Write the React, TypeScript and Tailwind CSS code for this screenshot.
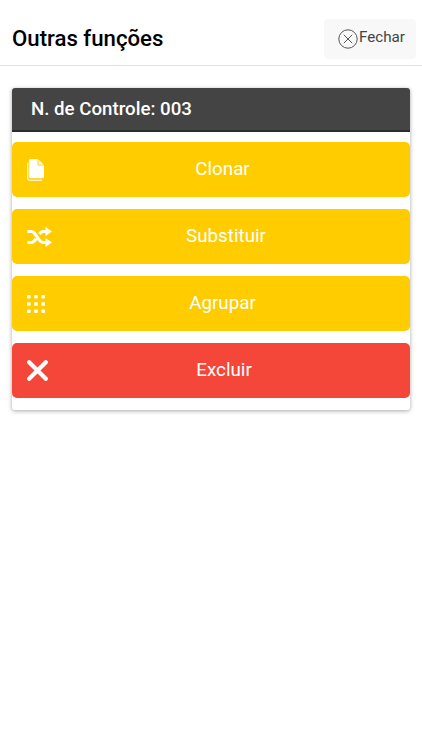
const CopyIcon = () => (
  <svg width="18" height="22" viewBox="0 0 18 22" fill="none" className="shrink-0">
    <path d="M0.8 3.5V20a1.2 1.2 0 0 0 1.2 1.2H15" stroke="white" strokeWidth="1.1" fill="none" />
    <path d="M2.2 1.2A1.2 1.2 0 0 1 3.4 0H11l6 6v12a1.2 1.2 0 0 1-1.2 1.2H3.4A1.2 1.2 0 0 1 2.2 18Z" fill="white" />
    <path d="M11 0v6h6" fill="none" stroke="#ffcc00" strokeWidth="0.9" />
  </svg>
)

const ShuffleIcon = () => (
  <svg width="25" height="20" viewBox="0 0 25 20" fill="none" className="shrink-0">
    <path d="M0.5 4.5H4.5C9 4.5 11 15.5 16 15.5H20" stroke="white" strokeWidth="3.2" />
    <path d="M0.5 15.5H4.5C6.5 15.5 8 13.5 9 11.8M12.5 7C13.5 5.5 14.5 4.5 16 4.5H20" stroke="white" strokeWidth="3.2" />
    <path d="M18.5 0L25 4.5L18.5 9Z" fill="white" />
    <path d="M18.5 11L25 15.5L18.5 20Z" fill="white" />
  </svg>
)

const GridIcon = () => (
  <svg width="18" height="18" viewBox="0 0 18 18" fill="white" className="shrink-0">
    <rect x="0" y="0" width="3.6" height="3.6" rx="0.8" />
    <rect x="7.2" y="0" width="3.6" height="3.6" rx="0.8" />
    <rect x="14.4" y="0" width="3.6" height="3.6" rx="0.8" />
    <rect x="0" y="7.2" width="3.6" height="3.6" rx="0.8" />
    <rect x="7.2" y="7.2" width="3.6" height="3.6" rx="0.8" />
    <rect x="14.4" y="7.2" width="3.6" height="3.6" rx="0.8" />
    <rect x="0" y="14.4" width="3.6" height="3.6" rx="0.8" />
    <rect x="7.2" y="14.4" width="3.6" height="3.6" rx="0.8" />
    <rect x="14.4" y="14.4" width="3.6" height="3.6" rx="0.8" />
  </svg>
)

const CloseIcon = () => (
  <svg width="21" height="21" viewBox="0 0 21 21" fill="none" className="shrink-0">
    <path d="M2.2 2.2L18.8 18.8M18.8 2.2L2.2 18.8" stroke="white" strokeWidth="4.2" strokeLinecap="round" />
  </svg>
)

const buttons = [
  { label: 'Clonar', icon: <CopyIcon />, color: 'bg-[#ffcc00]' },
  { label: 'Substituir', icon: <ShuffleIcon />, color: 'bg-[#ffcc00]' },
  { label: 'Agrupar', icon: <GridIcon />, color: 'bg-[#ffcc00]' },
  { label: 'Excluir', icon: <CloseIcon />, color: 'bg-[#f4473a]' },
]

const App = () => {
  return (
    <div className="min-h-[750px] w-full bg-white font-['Roboto',sans-serif]">
      <div className="flex h-[66px] items-center justify-between border-b border-[#e0e0e0] pl-[12px] pr-[6px] pt-[19px] pb-[6px]">
        <h1 className="-mt-[3px] text-[22.2px] font-medium leading-[30px] text-black">Outras funções</h1>
        <button className="flex h-[40px] w-[92px] items-center gap-[1px] rounded-[4px] bg-[#f8f8f8] pl-[14px] text-[15.2px] text-[#444444]">
          <svg width="20" height="20" viewBox="0 0 20 20" fill="none" className="shrink-0">
            <circle cx="10" cy="10" r="9.2" stroke="#555555" strokeWidth="1" />
            <path d="M5.8 5.8L14.2 14.2M14.2 5.8L5.8 14.2" stroke="#555555" strokeWidth="1" />
          </svg>
          <span className="-mt-[3px]">Fechar</span>
        </button>
      </div>

      <div className="mx-[12px] mt-[22px] rounded-[3px] bg-white pb-[12px] shadow-[0_1px_4px_rgba(0,0,0,0.35)]">
        <div className="flex h-[44px] items-center rounded-t-[3px] border-b-2 border-[#2b2b2b] bg-[#444444] pl-[19px] text-[18.7px] font-medium text-white">
          N. de Controle: 003
        </div>
        <div className="mt-[10px] flex flex-col gap-[12px]">
          {buttons.map((b) => (
            <button key={b.label} className={`flex h-[55px] items-center rounded-[5px] pl-[15px] pr-[10px] text-[18.8px] text-white ${b.color}`}>
              {b.icon}
              <span className="flex-1 text-center">{b.label}</span>
            </button>
          ))}
        </div>
      </div>
    </div>
  )
}

export default App
